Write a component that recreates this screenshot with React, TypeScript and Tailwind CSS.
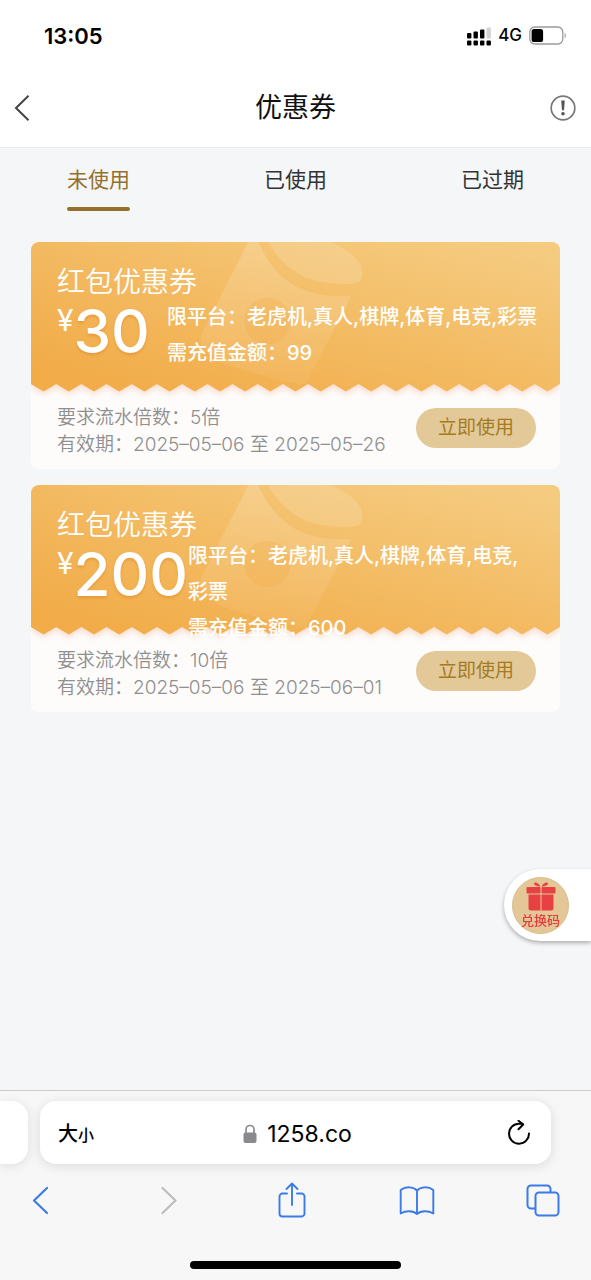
import { useState } from 'react';
import clsx from 'clsx';

type Coupon = {
  id: number;
  title: string;
  amount: number;
  platforms: string;
  deposit: number;
  turnover: number;
  from: string;
  to: string;
};

const TABS = ['未使用', '已使用', '已过期'];

const COUPONS: Coupon[] = [
  {
    id: 1,
    title: '红包优惠券',
    amount: 30,
    platforms: '老虎机,真人,棋牌,体育,电竞,彩票',
    deposit: 99,
    turnover: 5,
    from: '2025–05–06',
    to: '2025–05–26',
  },
  {
    id: 2,
    title: '红包优惠券',
    amount: 200,
    platforms: '老虎机,真人,棋牌,体育,电竞,彩票',
    deposit: 600,
    turnover: 10,
    from: '2025–05–06',
    to: '2025–06–01',
  },
];

// 21 teeth across a 528 wide ticket
const TEETH = 21;
const TICKET_PATH =
  'M0 0H528V142' +
  Array.from({ length: TEETH }, (_, i) => {
    const step = 528 / TEETH;
    const x = 528 - i * step;
    return `L${(x - step / 2).toFixed(2)} 149.5L${(x - step).toFixed(2)} 142`;
  }).join('') +
  'Z';

function StatusBar() {
  return (
    <div className="flex h-18 items-center justify-between pl-11 pr-6">
      <span className="text-[22px] font-semibold text-black">13:05</span>
      <div className="flex items-center gap-[7px]">
        <svg width="24" height="20" viewBox="0 0 24 20" aria-hidden="true">
          <rect x="0" y="7" width="4.4" height="5.5" rx="1" />
          <rect x="6.5" y="5.5" width="4.4" height="7" rx="1" />
          <rect x="13" y="3.5" width="4.4" height="9" rx="1" />
          <rect x="19.5" y="1.5" width="4.4" height="11" rx="1" fill="#d4d4d4" />
          <rect x="0" y="14.5" width="4.4" height="5" rx="1" />
          <rect x="6.5" y="14.5" width="4.4" height="5" rx="1" />
          <rect x="13" y="14.5" width="4.4" height="5" rx="1" />
          <rect x="19.5" y="14.5" width="4.4" height="5" rx="1" />
        </svg>
        <span className="text-[17px] font-medium text-black">4G</span>
        <svg width="38" height="20" viewBox="0 0 38 20" aria-hidden="true">
          <rect x="0.8" y="1" width="33" height="17" rx="5" fill="none" stroke="#9a9a9a" strokeWidth="1.3" />
          <rect x="2.6" y="3" width="11.5" height="13" rx="2.6" />
          <path d="M35.6 6.8c1.6.6 1.6 4.8 0 5.4z" fill="#9a9a9a" />
        </svg>
      </div>
    </div>
  );
}

function NavBar() {
  return (
    <div className="flex h-19 items-center justify-between border-b border-[#e9ebee] px-3.5 pb-1">
      <button type="button" aria-label="返回" className="w-7">
        <svg width="16" height="28" viewBox="0 0 16 28" fill="none" stroke="#444" strokeWidth="2">
          <path d="M14.5 1.8L2 14l12.5 12.2" />
        </svg>
      </button>
      <h1 className="text-[27px] leading-9 text-[#111]">优惠券</h1>
      <button type="button" aria-label="规则说明">
        <svg width="28" height="28" viewBox="0 0 28 28" fill="none">
          <circle cx="14" cy="14" r="11.8" stroke="#777" strokeWidth="1.7" />
          <path d="M12.2 6.6h3.6l-.8 9.6h-2z" fill="#555" />
          <circle cx="14" cy="19.7" r="1.8" fill="#555" />
        </svg>
      </button>
    </div>
  );
}

function TicketArt({ id }: { id: number }) {
  return (
    <svg
      className="absolute inset-0 h-full w-full overflow-visible drop-shadow-[0_3px_3px_rgba(240,140,90,0.28)]"
      viewBox="0 0 528 149"
      preserveAspectRatio="none"
      aria-hidden="true"
    >
      <defs>
        <linearGradient id={`bg-${id}`} gradientUnits="userSpaceOnUse" x1="300" y1="-20" x2="268" y2="170">
          <stop offset="0" stopColor="#f5cb80" />
          <stop offset="1" stopColor="#f2ae4c" />
        </linearGradient>
        <linearGradient id={`side-${id}`} x1="0" x2="1">
          <stop offset="0" stopColor="#f0a33a" stopOpacity="0.24" />
          <stop offset="0.5" stopColor="#f3b655" stopOpacity="0.1" />
          <stop offset="1" stopColor="#f5cb80" stopOpacity="0.15" />
        </linearGradient>
        <linearGradient id={`art-${id}`} x1="0" y1="0" x2="0" y2="1">
          <stop offset="0" stopColor="#fff" stopOpacity="0.18" />
          <stop offset="1" stopColor="#fff" stopOpacity="0.05" />
        </linearGradient>
      </defs>
      <path d={TICKET_PATH} fill={`url(#bg-${id})`} />
      <path d={TICKET_PATH} fill={`url(#side-${id})`} />
      <path
        d="M217 0H227C237 24 254 42 275 49C291 54 305 55 320 54L274 142H268L243 137L192 122Q166 108 170 92Z"
        fill={`url(#art-${id})`}
      />
      <path d="M237 0C246 18 262 32 281 38C300 43 320 43 328 40Q333 32 329 23C322 11 309 4 298 0Z" fill="#fff" fillOpacity="0.15" />
      <circle cx="236" cy="79" r="23" fill="#efa640" fillOpacity="0.25" />
    </svg>
  );
}

function CouponCard({ coupon }: { coupon: Coupon }) {
  return (
    <li className="overflow-hidden rounded-lg bg-[#fdfcfb]">
      <div className="relative pt-7 pr-5.5 pb-4 pl-6.5 text-white">
        <TicketArt id={coupon.id} />
        <div className="relative">
          <h2 className="text-[28px] leading-[25px] font-[350]">{coupon.title}</h2>
          <div className="flex h-20 items-start">
            <p className="flex min-w-[110px] shrink-0 items-start">
              <span className="text-[30px] leading-[50px] font-normal">¥</span>
              <span className="text-[60px] leading-18 font-medium [text-shadow:0_2px_3px_rgba(214,120,20,0.4)]">
                {coupon.amount}
              </span>
            </p>
            <div className="flex min-h-20 flex-1 flex-col justify-center text-xl leading-9 font-medium">
              <p>限平台：{coupon.platforms}</p>
              <p>需充值金额：{coupon.deposit}</p>
            </div>
          </div>
        </div>
      </div>
      <div className="flex items-start justify-between pt-[13px] pr-6 pb-[11px] pl-6.5 text-[#8f8f8f]">
        <div className="text-[19px] leading-[27px] font-[350]">
          <p>要求流水倍数：{coupon.turnover}倍</p>
          <p>
            有效期：{coupon.from} 至 {coupon.to}
          </p>
        </div>
        <button type="button" className="mt-1 h-10 shrink-0 rounded-full bg-[#e3c898] px-5.5 text-[19px] text-[#a37c22]">
          立即使用
        </button>
      </div>
    </li>
  );
}

function RedeemButton() {
  return (
    <button
      type="button"
      className="fixed right-0 bottom-[339px] flex h-18 items-center rounded-l-full bg-white pr-5.5 pl-2 shadow-[0_2px_4px_rgba(0,0,0,0.3)]"
    >
      <span className="flex size-[57px] flex-col items-center rounded-full border border-[#d9bd88] bg-[#e3c797] pt-1">
        <svg width="30" height="30" viewBox="0 0 30 30" fill="#e84144" aria-hidden="true">
          <path d="M14.5 4.6C12.5.8 8.5-.6 8 1.4c-.2 1.8 3 3 6.5 3.2zM15.5 4.6C17.5.8 21.5-.6 22 1.4c.2 1.8-3 3-6.5 3.2z" />
          <rect x="0.5" y="5" width="14" height="6.5" rx="1" />
          <rect x="15.5" y="5" width="14" height="6.5" rx="1" />
          <path d="M2.5 12.5h12v16H5A2.5 2.5 0 0 1 2.500 26zM15.5 12.5h12V26a2.500 2.500 0 0 1-2.500 2.500h-9.500z" />
        </svg>
        <span className="text-[13px] leading-4 font-medium whitespace-nowrap text-[#e53b3e]">兑换码</span>
      </span>
    </button>
  );
}

function AddressRow() {
  return (
    <div className="flex gap-3 pr-10">
      <div className="w-7 rounded-r-2xl bg-white shadow-[0_2px_12px_rgba(0,0,0,0.1)]" />
      <div className="flex h-[63px] flex-1 items-center justify-between rounded-2xl bg-white pt-0.5 pr-5 pl-4.5 text-black shadow-[0_2px_12px_rgba(0,0,0,0.12)]">
        <button type="button" className="font-medium">
          <span className="text-xl">大</span>
          <span className="text-base">小</span>
        </button>
        <button type="button" className="flex items-center gap-2.5 pr-1.5 text-[23px] leading-8">
          <svg width="14" height="20" viewBox="0 0 14 20" fill="none" aria-hidden="true">
            <path d="M3 10V5.5a4 4 0 0 1 8 0V10" stroke="#8a8a8d" strokeWidth="1.7" />
            <rect x="0.5" y="8.5" width="13" height="10.5" rx="2" fill="#8a8a8d" />
          </svg>
          1258.co
        </button>
        <button type="button" aria-label="刷新">
          <svg width="24" height="28" viewBox="0 0 24 28" fill="none" stroke="#000" strokeWidth="2" strokeLinecap="round" strokeLinejoin="round">
            <path d="M22 13.5a10 10 0 1 1-10-9.8h3.5" />
            <path d="M11.5 0.800l4.700 3.700-4.700 4.800" />
          </svg>
        </button>
      </div>
    </div>
  );
}

function Toolbar() {
  return (
    <div className="flex items-center justify-between pr-7 pl-5 text-[#3b7be8]">
      <button type="button" aria-label="后退" className="flex w-10 justify-center">
        <svg width="18" height="36" viewBox="0 0 18 36" fill="none" stroke="currentColor" strokeWidth="2.2" strokeLinecap="round" strokeLinejoin="round">
          <path d="M16 6L3 18.5l13 12.5" />
        </svg>
      </button>
      <button type="button" aria-label="前进" disabled className="flex w-10 justify-center text-[#bdbdbf]">
        <svg width="22" height="36" viewBox="0 0 22 36" fill="none" stroke="currentColor" strokeWidth="2.2" strokeLinecap="round" strokeLinejoin="round">
          <path d="M7.500 6l13 12.500L7.500 31" />
        </svg>
      </button>
      <button type="button" aria-label="分享" className="flex w-10 justify-center">
        <svg width="28" height="36" viewBox="0 0 28 36" fill="none" stroke="currentColor" strokeWidth="1.9" strokeLinecap="round" strokeLinejoin="round">
          <path d="M9 11.5H4.500A3 3 0 0 0 1.500 14.500v17a3 3 0 0 0 3 3h19a3 3 0 0 0 3-3v-17a3 3 0 0 0-3-3H19" />
          <path d="M14 23V1.5M8.500 7L14 1.500 19.500 7" />
        </svg>
      </button>
      <button type="button" aria-label="书签" className="flex w-10 justify-center">
        <svg width="36" height="36" viewBox="0 0 36 36" fill="none" stroke="currentColor" strokeWidth="1.9" strokeLinejoin="round">
          <path d="M18 8.500C14.500 4.500 6.500 4.200 1.700 8v23.500c5-3 12.500-3 16.300.5 3.800-3.500 11.300-3.500 16.300-.5V8C29.500 4.200 21.500 4.500 18 8.500zV32" />
        </svg>
      </button>
      <button type="button" aria-label="标签页" className="flex w-10 justify-center">
        <svg width="34" height="36" viewBox="0 0 34 36" fill="none" stroke="currentColor" strokeWidth="2">
          <rect x="9.5" y="10.5" width="23" height="23" rx="3.5" />
          <path d="M9.500 26.500H5a3.500 3.500 0 0 1-3.500-3.500V7A3.500 3.500 0 0 1 5 3.500h16A3.500 3.500 0 0 1 24.500 7v3.500" />
        </svg>
      </button>
    </div>
  );
}

export default function App() {
  const [active, setActive] = useState(0);

  return (
    <div className="flex min-h-screen flex-col bg-[#f4f6f8] font-[Inter,'Noto_Sans_CJK_SC',sans-serif]">
      <header className="bg-white">
        <StatusBar />
        <NavBar />
      </header>
      <nav className="flex">
        {TABS.map((tab, i) => (
          <button
            key={tab}
            type="button"
            onClick={() => setActive(i)}
            className={clsx('flex flex-1 justify-center pt-4', i === active ? 'text-[#94702c]' : 'text-[#333]')}
          >
            <span className="flex flex-col gap-[11px] text-[21px] leading-8">
              {tab}
              {i === active && <span className="h-1 rounded-full bg-[#94702c]" />}
            </span>
          </button>
        ))}
      </nav>
      <main className="flex-1 px-[31px] pt-[31px] pb-8">
        <ul className="flex flex-col gap-4">
          {COUPONS.map((coupon) => (
            <CouponCard key={coupon.id} coupon={coupon} />
          ))}
        </ul>
      </main>
      <RedeemButton />
      <footer className="overflow-hidden border-t border-[#cbccce] bg-[#f7f7f7] pt-2.5 pb-[11px]">
        <AddressRow />
        <div className="pt-[18px] pb-[43px]">
          <Toolbar />
        </div>
        <div className="mx-auto h-2 w-[211px] rounded-full bg-black" />
      </footer>
    </div>
  );
}
